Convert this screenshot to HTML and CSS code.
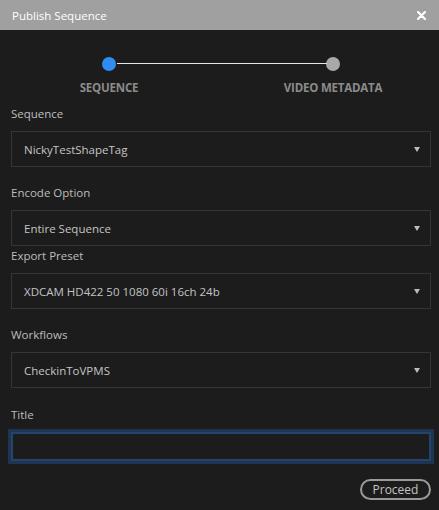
FILE: index.html
```html
<!DOCTYPE html>
<html lang="en">
  <head>
    <meta charset="UTF-8" />
    <meta name="viewport" content="width=device-width, initial-scale=1.0" />
    <title>Publish Sequence</title>
    <link rel="stylesheet" href="styles.css">
  </head>
  <body>
    <!-- Barra de título do diálogo -->
    <header class="dialog-header">
      <span class="dialog-title">Publish Sequence</span>
      <button class="close-btn" aria-label="Close">
        <svg width="9" height="9" viewBox="0 0 9 9">
          <path d="M1 1 L8 8 M8 1 L1 8" stroke="#fff" stroke-width="2.2" stroke-linecap="round" />
        </svg>
      </button>
    </header>

    <main class="dialog-body">
      <!-- Etapas do assistente -->
      <div class="steps">
        <div class="step step-active">
          <span class="step-dot"></span>
          <span class="step-label">SEQUENCE</span>
        </div>
        <div class="step">
          <span class="step-dot"></span>
          <span class="step-label">VIDEO METADATA</span>
        </div>
      </div>

      <div class="field">
        <label class="field-label">Sequence</label>
        <div class="select"><span>NickyTestShapeTag</span><span class="caret"></span></div>
      </div>

      <div class="field field-tight">
        <label class="field-label">Encode Option</label>
        <div class="select"><span>Entire Sequence</span><span class="caret"></span></div>
      </div>

      <div class="field">
        <label class="field-label">Export Preset</label>
        <div class="select"><span>XDCAM HD422 50 1080 60i 16ch 24b</span><span class="caret"></span></div>
      </div>

      <div class="field">
        <label class="field-label">Workflows</label>
        <div class="select"><span>CheckinToVPMS</span><span class="caret"></span></div>
      </div>

      <div class="field field-title">
        <label class="field-label" for="title-input">Title</label>
        <input type="text" id="title-input" class="text-input">
      </div>

      <div class="actions">
        <button class="proceed-btn">Proceed</button>
      </div>
    </main>
  </body>
</html>
```

FILE: styles.css
```css
html, body {
  margin: 0;
  background: #1c1c1c;
}

body {
  font-family: "Open Sans", "Noto Sans", sans-serif;
  color: #c4c4c4;
  font-size: 11.5px;
}

/* Barra de título */
.dialog-header {
  height: 30px;
  background: #a0a0a0;
  display: flex;
  align-items: center;
  justify-content: space-between;
  padding: 0 12px;
}

.dialog-title {
  color: #fff;
  font-size: 11.5px;
}

.close-btn {
  background: none;
  border: 0;
  padding: 0;
  margin-right: 1px;
  display: flex;
  cursor: pointer;
}

.dialog-body {
  padding: 0 8px 0 11px;
}

/* Etapas */
.steps {
  position: relative;
  display: grid;
  grid-template-columns: 120px 120px;
  column-gap: 104px;
  padding: 27px 0 0 38px;
}

.steps:before {
  content: "";
  position: absolute;
  top: 33px;
  left: 106px;
  width: 210px;
  height: 1px;
  background: #e6e6e6;
}

.step {
  display: flex;
  flex-direction: column;
  align-items: center;
}

.step-dot {
  width: 14px;
  height: 14px;
  border-radius: 50%;
  background: #a9a9a9;
}

.step-active .step-dot {
  background: #2f8cf2;
}

.step-label {
  margin-top: 9px;
  line-height: 16px;
  font-weight: 700;
  color: #8b8b8b;
  font-size: 11.5px;
  letter-spacing: -0.2px;
}

/* Campos */
.field {
  margin-top: 10px;
}

.field + .field {
  margin-top: 18px;
}

.field-tight + .field {
  margin-top: 2px;
}

.field + .field-title {
  margin-top: 19px;
}

.field-label {
  display: block;
  line-height: 16px;
  margin-bottom: 9px;
  color: #bdbdbd;
}

.select {
  box-sizing: border-box;
  height: 36px;
  border: 1px solid #353535;
  display: flex;
  align-items: center;
  justify-content: space-between;
  padding: 0 10px 0 12px;
  color: #c4c4c4;
}

.caret {
  width: 0;
  height: 0;
  border-left: 3px solid transparent;
  border-right: 3px solid transparent;
  border-top: 5px solid #bdbdbd;
}

.text-input {
  display: block;
  box-sizing: border-box;
  width: 100%;
  height: 29px;
  margin: 0;
  background: #1c1c1c;
  border: 2px solid #24446c;
  box-shadow: 0 0 0 3px #1d3452;
  outline: none;
  color: #c8c8c8;
}

.actions {
  display: flex;
  justify-content: flex-end;
  margin-top: 18px;
}

.proceed-btn {
  box-sizing: border-box;
  width: 71px;
  height: 21px;
  border: 2px solid #9a9a9a;
  border-radius: 11px;
  background: none;
  color: #c4c4c4;
  font-family: inherit;
  font-size: 12px;
  padding: 0;
  line-height: 17px;
  cursor: pointer;
}
```
